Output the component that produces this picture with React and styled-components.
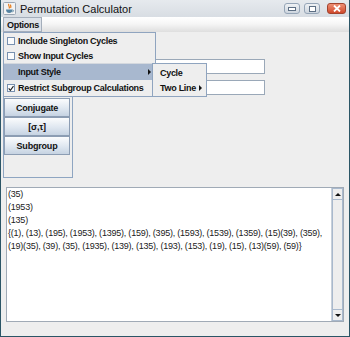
import React from "react";
import styled, { createGlobalStyle } from "styled-components";

const GlobalStyle = createGlobalStyle`
  html, body {
    margin: 0;
    padding: 0;
    background: #eeeeee;
  }
  body {
    font-family: "Liberation Sans", Arial, sans-serif;
  }
  * {
    box-sizing: border-box;
  }
`;

const Window = styled.div`
  position: relative;
  width: 350px;
  height: 337px;
  display: flex;
  flex-direction: column;
  background: #eeeeee;
  border: 1px solid #2b5566;
  border-top: none;
  overflow: hidden;
`;

const TitleBar = styled.div`
  height: 17px;
  display: flex;
  align-items: center;
  padding: 0 3px 0 2px;
  background: linear-gradient(#e6eaee, #d8dde3);
`;

const Title = styled.span`
  margin-left: 4px;
  font-size: 11px;
  color: #111;
`;

const WinButtons = styled.div`
  margin-left: auto;
  display: flex;
  align-items: center;
  gap: 4px;
`;

const WinButton = styled.div`
  width: ${(p) => (p.$close ? 19 : 16)}px;
  height: 11px;
  margin-left: ${(p) => (p.$close ? 3 : 0)}px;
  border-radius: 3px;
  border: 1px solid ${(p) => (p.$close ? "#a2432e" : "#95a5b7")};
  background: ${(p) =>
    p.$close
      ? "linear-gradient(#ee8f74, #d0492c)"
      : "linear-gradient(#eef1f4, #cdd5de)"};
  display: flex;
  align-items: center;
  justify-content: center;
`;

const MenuBar = styled.div`
  position: relative;
  height: 15px;
  display: flex;
  align-items: stretch;
  padding-left: 2px;
  background: linear-gradient(#ffffff, #f6f6f6 45%, #dedede);
`;

const MenuTitle = styled.div`
  width: 39px;
  display: flex;
  align-items: center;
  padding-left: 3px;
  font-size: 9px;
  font-weight: bold;
  letter-spacing: -0.3px;
  color: #111;
  background: ${(p) => (p.$open ? "#dde2e9" : "transparent")};
  border: 1px solid ${(p) => (p.$open ? "#a4aebb" : "transparent")};
`;

const Dropdown = styled.div`
  position: absolute;
  top: 15px;
  left: 2px;
  width: 153px;
  background: #eeeeee;
  border: 1px solid #8fa4bf;
  z-index: 10;
`;

const MenuItem = styled.div`
  position: relative;
  height: ${(p) => p.$h || 15}px;
  display: flex;
  align-items: center;
  padding-left: 3px;
  font-size: 9px;
  font-weight: bold;
  letter-spacing: -0.3px;
  color: #111;
  background: ${(p) => (p.$active ? "#a8b8cf" : "transparent")};
`;

const Separator = styled.div`
  height: 1px;
  background: #d4d8de;
`;

const CheckBox = styled.span`
  width: 8px;
  height: 8px;
  margin-right: 3px;
  border: 1px solid #7891b0;
  background: #fbfcfd;
  display: flex;
  align-items: center;
  justify-content: center;
`;

const ItemLabel = styled.span`
  margin-left: ${(p) => (p.$indent ? 11 : 0)}px;
`;

const Arrow = styled.span`
  margin-left: ${(p) => (p.$inline ? "3px" : "auto")};
  margin-right: 4px;
  width: 0;
  height: 0;
  border-top: 3px solid transparent;
  border-bottom: 3px solid transparent;
  border-left: 3px solid #111;
`;

const SubMenu = styled.div`
  position: absolute;
  top: 30px;
  left: 148px;
  width: 55px;
  padding: 1px 0;
  background: #eeeeee;
  border: 1px solid #8fa4bf;
  z-index: 11;
`;

const SubItem = styled.div`
  height: 15px;
  display: flex;
  align-items: center;
  padding-left: 7px;
  font-size: 9px;
  font-weight: bold;
  letter-spacing: -0.3px;
  color: #111;
`;

const Body = styled.div`
  flex: 1;
  display: flex;
  flex-direction: column;
`;

const TopRow = styled.div`
  display: flex;
  padding: 3px 0 0 2px;
`;

const SidePanel = styled.div`
  width: 70px;
  height: 143px;
  padding-top: 62px;
  display: flex;
  flex-direction: column;
  border: 1px solid #8ea5c1;
`;

const ActionButton = styled.div`
  width: 66px;
  height: 19px;
  display: flex;
  align-items: center;
  justify-content: center;
  font-size: 9px;
  font-weight: bold;
  letter-spacing: -0.2px;
  color: #111;
  border: 1px solid #8c9db3;
  background: linear-gradient(#fbfcfd, #dfe7f0 55%, #c6d3e2);
`;

const FieldColumn = styled.div`
  margin-left: 77px;
  padding-top: 24px;
  display: flex;
  flex-direction: column;
  gap: 6px;
`;

const Field = styled.div`
  width: 115px;
  height: 15px;
  background: #ffffff;
  border: 1px solid #9aa8b8;
`;

const OutputArea = styled.div`
  height: 135px;
  margin: 9px 5px 0 5px;
  display: flex;
  background: #ffffff;
  border: 1px solid #a0aab6;
`;

const OutputText = styled.div`
  flex: 1;
  overflow: hidden;
  padding: 0 0 0 1px;
  font-size: 9px;
  line-height: 13px;
  letter-spacing: -0.22px;
  color: #222;
  white-space: pre;
`;

const ScrollBar = styled.div`
  width: 12px;
  display: flex;
  flex-direction: column;
  background: #eeeeee;
  border-left: 1px solid #c7d0da;
`;

const ScrollButton = styled.div`
  height: 12px;
  display: flex;
  align-items: center;
  justify-content: center;
  border: 1px solid #a9b9cd;
  background: #eeeeee;
`;

const ScrollThumb = styled.div`
  flex: 1;
  border: 1px solid #a9b9cd;
  border-top: none;
  border-bottom: none;
  background: #eeeeee;
`;

const Triangle = styled.span`
  width: 0;
  height: 0;
  border-left: 3px solid transparent;
  border-right: 3px solid transparent;
  ${(p) => (p.$down ? "border-top" : "border-bottom")}: 3px solid #111;
`;

const AppIcon = () => (
  <svg width="13" height="13" viewBox="0 0 13 13">
    <rect x="0.5" y="0.5" width="12" height="12" rx="1" fill="#f3f3f3" stroke="#9aa6b4" />
    <path d="M6 2 C4.5 3.5 7.5 4.5 6 6.5 M7.8 2.6 C7 3.6 8.6 4.4 7.6 6" stroke="#e76f00" strokeWidth="1.1" fill="none" />
    <path d="M3 7.5 H9.5 C9.5 10 8 11 6.2 11 C4.4 11 3 10 3 7.5 Z" fill="#5382a1" />
    <path d="M9.5 8 C11 8 11 9.8 9.2 9.8" stroke="#5382a1" strokeWidth="0.9" fill="none" />
  </svg>
);

const Check = () => (
  <svg width="7" height="7" viewBox="0 0 7 7">
    <path d="M0.8 3.4 L2.8 5.6 L6.4 0.8" stroke="#222" strokeWidth="1.3" fill="none" />
  </svg>
);

const outputLines = [
  "(35)",
  "(1953)",
  "(135)",
  "{(1), (13), (195), (1953), (1395), (159), (395), (1593), (1539), (1359), (15)(39), (359),",
  "(19)(35), (39), (35), (1935), (139), (135), (193), (153), (19), (15), (13)(59), (59)}",
];

export default function App() {
  return (
    <>
      <GlobalStyle />
      <Window>
        <TitleBar>
          <AppIcon />
          <Title>Permutation Calculator</Title>
          <WinButtons>
            <WinButton>
              <svg width="8" height="4" viewBox="0 0 8 4">
                <rect x="0.5" y="0.5" width="7" height="3" fill="#fff" stroke="#5d6f84" />
              </svg>
            </WinButton>
            <WinButton>
              <svg width="7" height="6" viewBox="0 0 7 6">
                <rect x="0.5" y="0.5" width="6" height="5" fill="#fff" stroke="#5d6f84" />
              </svg>
            </WinButton>
            <WinButton $close>
              <svg width="8" height="7" viewBox="0 0 8 7">
                <path d="M1 0.5 L7 6.5 M7 0.5 L1 6.5" stroke="#fff" strokeWidth="1.8" />
              </svg>
            </WinButton>
          </WinButtons>
        </TitleBar>

        <MenuBar>
          <MenuTitle $open>Options</MenuTitle>
          <Dropdown>
            <MenuItem>
              <CheckBox />
              Include Singleton Cycles
            </MenuItem>
            <MenuItem>
              <CheckBox />
              Show Input Cycles
            </MenuItem>
            <Separator />
            <MenuItem $h={16} $active>
              <ItemLabel $indent>Input Style</ItemLabel>
              <Arrow />
            </MenuItem>
            <MenuItem $h={16}>
              <CheckBox>
                <Check />
              </CheckBox>
              Restrict Subgroup Calculations
            </MenuItem>
            <SubMenu>
              <SubItem>Cycle</SubItem>
              <SubItem>
                Two Line
                <Arrow $inline />
              </SubItem>
            </SubMenu>
          </Dropdown>
        </MenuBar>

        <Body>
          <TopRow>
            <SidePanel>
              <ActionButton>Conjugate</ActionButton>
              <ActionButton>[σ,τ]</ActionButton>
              <ActionButton>Subgroup</ActionButton>
            </SidePanel>
            <FieldColumn>
              <Field />
              <Field />
            </FieldColumn>
          </TopRow>

          <OutputArea>
            <OutputText>{outputLines.join("\n")}</OutputText>
            <ScrollBar>
              <ScrollButton>
                <Triangle />
              </ScrollButton>
              <ScrollThumb />
              <ScrollButton>
                <Triangle $down />
              </ScrollButton>
            </ScrollBar>
          </OutputArea>
        </Body>
      </Window>
    </>
  );
}
